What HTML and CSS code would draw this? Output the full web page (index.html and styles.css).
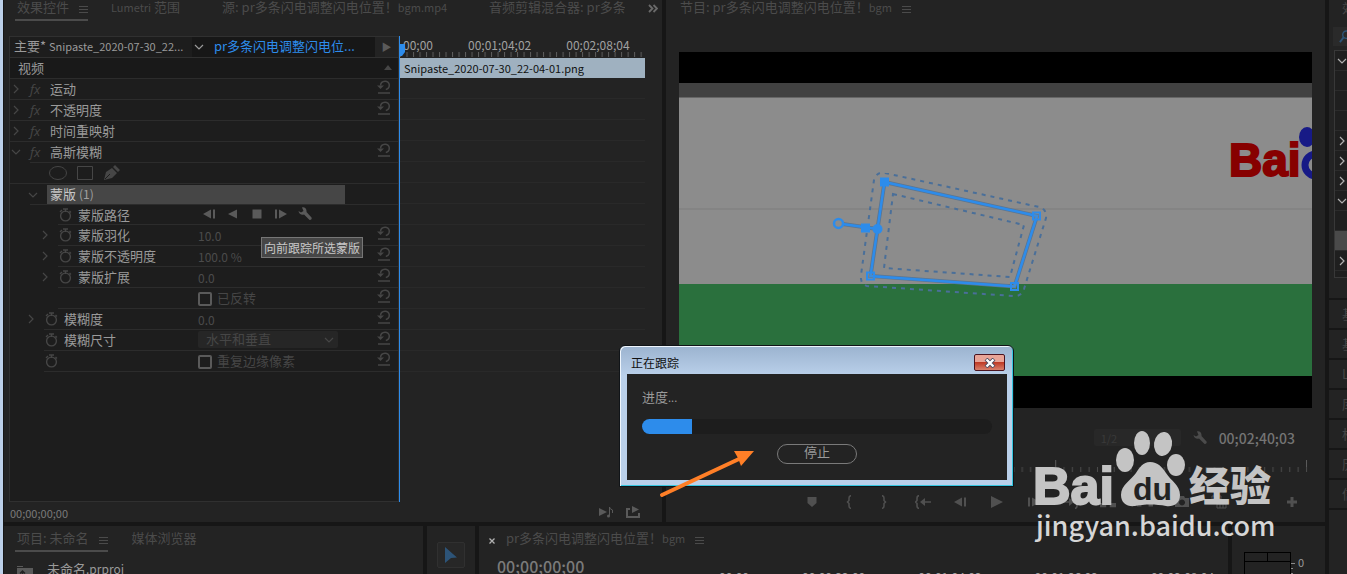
FILE: index.html
```html
<!DOCTYPE html>
<html lang="zh-CN">
<head>
  <meta charset="UTF-8">
  <meta name="viewport" content="width=device-width, initial-scale=1.0">
  <title>效果控件</title>
  <link rel="stylesheet" href="styles.css">
</head>
<body>
  <!-- Iconos compartidos -->
  <svg class="sprite" aria-hidden="true">
    <symbol id="menu" viewBox="0 0 9 9"><path d="M0 1.5h9M0 4.5h9M0 7.5h9" stroke="currentColor"/></symbol>
    <symbol id="right" viewBox="0 0 10 10"><path d="M3 1l4 4-4 4" fill="none" stroke="currentColor" stroke-width="1.2"/></symbol>
    <symbol id="down" viewBox="0 0 10 10"><path d="M1 3l4 4 4-4" fill="none" stroke="currentColor" stroke-width="1.2"/></symbol>
    <symbol id="reset" viewBox="0 0 14 14"><path d="M3.500 5.500C4 .3 12 -.2 12.300 5c0 2.500-1.300 4-3.500 4.500M1 13h12" fill="none" stroke="currentColor" stroke-width="1.500"/><path d="M0 5.500h7L3.500 9z" fill="currentColor"/></symbol>
    <symbol id="watch" viewBox="0 0 14 14"><circle cx="6.500" cy="8" r="4.900" fill="none" stroke="currentColor" stroke-width="1.400"/><path d="M4 1h5M6.500 1v3M1 4l2-2M10.500 3l1.500 1.500" stroke="currentColor" stroke-width="1.300"/></symbol>
    <symbol id="wrench" viewBox="0 0 14 14"><path d="M4 .5C6.500-.3 9 2 8.500 5l5 5.500c.8 1.300-.9 3-2.200 2.200L6 7.500C3.500 8.500.8 6.500.5 4L3 5.500 5.500 4z" fill="currentColor"/></symbol>
    <symbol id="play" viewBox="0 0 14 14"><path d="M1 1l12 6-12 6z" fill="currentColor"/></symbol>
    <symbol id="back" viewBox="0 0 14 14"><path d="M11 2.500v9L2 7z" fill="currentColor"/></symbol>
    <symbol id="step-back" viewBox="0 0 14 14"><path d="M9 2.500v9L1 7zM11 2.500h2v9h-2z" fill="currentColor"/></symbol>
    <symbol id="step" viewBox="0 0 14 14"><path d="M5 2.500v9L13 7zM1 2.500h2v9H1z" fill="currentColor"/></symbol>
    <symbol id="stop" viewBox="0 0 14 14"><path d="M2.500 2.500h9v9h-9z" fill="currentColor"/></symbol>
    <symbol id="marker" viewBox="0 0 14 14"><path d="M2.500 2h9v6L7 12 2.500 8z" fill="currentColor"/></symbol>
    <symbol id="brace-l" viewBox="0 0 14 14"><path d="M9 .7Q7 .7 7 3v2.500L5.500 7 7 8.500V11q0 2.300 2 2.300" fill="none" stroke="currentColor" stroke-width="1.500"/></symbol>
    <symbol id="brace-r" viewBox="0 0 14 14"><path d="M3 .7Q5 .7 5 3v2.500L6.500 7 5 8.500V11q0 2.300-2 2.300" fill="none" stroke="currentColor" stroke-width="1.500"/></symbol>
    <symbol id="goto-in" viewBox="0 0 16 14"><path d="M4 .7Q2 .7 2 3v2.500L.7 7 2 8.500V11q0 2.300 2 2.300M9 7h7" fill="none" stroke="currentColor" stroke-width="1.600"/><path d="M5 7l5-4v8z" fill="currentColor"/></symbol>
    <symbol id="goto-out" viewBox="0 0 16 14"><path d="M12 .7q2 0 2 2.300v2.500L15.300 7 14 8.500V11q0 2.300-2 2.300M0 7h7" fill="none" stroke="currentColor" stroke-width="1.600"/><path d="M11 7L6 3v8z" fill="currentColor"/></symbol>
    <symbol id="lift" viewBox="0 0 18 14"><path d="M0 8h7v5H0zM11 8h7v5h-7zM5 5l4-4 4 4h-3v3H8V5z" fill="currentColor"/></symbol>
    <symbol id="extract" viewBox="0 0 18 14"><path d="M0 2h5v10H0zM13 2h5v10h-5zM6 7l4-3v2h2v2h-2v2z" fill="currentColor"/></symbol>
    <symbol id="camera" viewBox="0 0 16 14"><path fill-rule="evenodd" d="M1 3h4l1-2h4l1 2h4v9H1zM8 4.500a3 3 0 1 0 .1 0z" fill="currentColor"/></symbol>
    <symbol id="compare" viewBox="0 0 16 14"><path d="M1 1h9v7H1zM6 6h9v7H6zM6 9h9M9 6v7M12 6v7M1 4h9" fill="none" stroke="currentColor"/></symbol>
    <symbol id="plus" viewBox="0 0 14 14"><path d="M7 2v10M2 7h10" stroke="currentColor" stroke-width="3"/></symbol>
  </svg>

  <div class="app">
    <main class="workspace">
      <div class="row-top">
        <!-- Panel de controles de efectos -->
        <section class="panel effects">
          <nav class="tabs">
            <button class="tab active">效果控件<svg class="menu"><use href="#menu"/></svg></button>
            <button class="tab"><span><span class="latin">Lumetri</span> 范围</span></button>
            <button class="tab"><span>源: pr多条闪电调整闪电位置！<span class="latin">bgm.mp4</span></span></button>
            <button class="tab clipped">音频剪辑混合器: pr多条闪电</button>
            <button class="more" aria-label="更多"><svg viewBox="0 0 10 9"><path d="M1 1l3.500 3.500L1 8M5.500 1L9 4.500 5.500 8" fill="none" stroke="currentColor" stroke-width="1.800"/></svg></button>
          </nav>
          <div class="effects-body">
            <div class="controls">
              <div class="clip-head">
                <span class="master">主要* <span class="latin">Snipaste_2020-07-30_22...</span></span>
                <button class="sequence"><svg class="ico10"><use href="#down"/></svg><span>pr多条闪电调整闪电位...</span></button>
                <button class="toggle" aria-label="时间轴">▶</button>
              </div>
              <div class="row video"><span>视频</span><i class="up"></i></div>
              <div class="row"><svg class="ico10"><use href="#right"/></svg><em>fx</em><span class="name">运动</span><svg class="reset"><use href="#reset"/></svg></div>
              <div class="row"><svg class="ico10"><use href="#right"/></svg><em>fx</em><span class="name">不透明度</span><svg class="reset"><use href="#reset"/></svg></div>
              <div class="row"><svg class="ico10"><use href="#right"/></svg><em>fx</em><span class="name">时间重映射</span></div>
              <div class="row line-20"><svg class="ico10"><use href="#down"/></svg><em>fx</em><span class="name">高斯模糊</span><svg class="reset"><use href="#reset"/></svg></div>
              <div class="row shapes">
                <button aria-label="椭圆"><svg viewBox="0 0 18 16"><ellipse cx="9" cy="8" rx="8.500" ry="6.500" fill="none" stroke="currentColor"/></svg></button>
                <button aria-label="矩形"><svg viewBox="0 0 18 16"><path d="M1.500 1.500h15v13h-15z" fill="none" stroke="currentColor"/></svg></button>
                <button aria-label="钢笔"><svg viewBox="0 0 18 16"><path d="M1 15L3 7l6-4 5 5-5 5zM10 2l2-2 5 5-2 2z" fill="currentColor"/><path d="M2 14l5-5" stroke="#1d1d1d"/></svg></button>
              </div>
              <div class="row mask line-20"><svg class="ico10"><use href="#down"/></svg><span class="mask-name">蒙版 <small>(1)</small></span></div>
              <div class="row sub path line-48">
                <i class="ico10"></i><svg class="watch"><use href="#watch"/></svg><span class="name">蒙版路径</span>
                <div class="track">
                  <button aria-label="向后跟踪一帧"><svg><use href="#step-back"/></svg></button>
                  <button aria-label="向后跟踪"><svg><use href="#back"/></svg></button>
                  <button aria-label="停止"><svg><use href="#stop"/></svg></button>
                  <button aria-label="向前跟踪一帧"><svg><use href="#step"/></svg></button>
                  <button aria-label="跟踪方法"><svg><use href="#wrench"/></svg></button>
                </div>
                <div class="tooltip">向前跟踪所选蒙版</div>
              </div>
              <div class="row sub line-48"><svg class="ico10"><use href="#right"/></svg><svg class="watch"><use href="#watch"/></svg><span class="name">蒙版羽化</span><span class="value">10.0</span><svg class="reset"><use href="#reset"/></svg></div>
              <div class="row sub line-48"><svg class="ico10"><use href="#right"/></svg><svg class="watch"><use href="#watch"/></svg><span class="name">蒙版不透明度</span><span class="value">100.0 %</span><svg class="reset"><use href="#reset"/></svg></div>
              <div class="row sub line-48"><svg class="ico10"><use href="#right"/></svg><svg class="watch"><use href="#watch"/></svg><span class="name">蒙版扩展</span><span class="value">0.0</span><svg class="reset"><use href="#reset"/></svg></div>
              <div class="row sub line-48"><span class="name"></span><label class="check"><input type="checkbox">已反转</label><svg class="reset"><use href="#reset"/></svg></div>
              <div class="row prop line-34"><svg class="ico10"><use href="#right"/></svg><svg class="watch"><use href="#watch"/></svg><span class="name">模糊度</span><span class="value">0.0</span><svg class="reset"><use href="#reset"/></svg></div>
              <div class="row prop line-34"><i class="ico10"></i><svg class="watch"><use href="#watch"/></svg><label class="name" for="dimension">模糊尺寸</label>
                <span class="select"><select id="dimension"><option>水平和垂直</option></select><svg class="ico10"><use href="#down"/></svg></span>
                <svg class="reset"><use href="#reset"/></svg></div>
              <div class="row prop line-34"><i class="ico10"></i><svg class="watch"><use href="#watch"/></svg><span class="name"></span><label class="check"><input type="checkbox">重复边缘像素</label><svg class="reset"><use href="#reset"/></svg></div>
            </div>
            <div class="keyframes">
              <div class="ruler">
                <div class="labels"><span>00;00</span><span>00;01;04;02</span><span>00;02;08;04</span></div>
                <svg class="ticks" viewBox="0 0 246 5" preserveAspectRatio="none">
                  <defs><pattern id="small-ticks" width="6.530" height="5" patternUnits="userSpaceOnUse"><path d="M.5 0v5" stroke="#5c5c5c"/></pattern></defs>
                  <rect width="244" height="5" fill="url(#small-ticks)"/>
                </svg>
              </div>
              <div class="clip">Snipaste_2020-07-30_22-04-01.png</div>
              <div class="lines"></div>
              <svg class="playhead" viewBox="0 0 6 12"><path d="M0 0h6v8l-3 4H0z" fill="#2d8ceb"/></svg>
            </div>
          </div>
          <footer class="effects-foot">
            <span>00;00;00;00</span>
            <button aria-label="播放音频"><svg viewBox="0 0 14 12"><path d="M0 2l8 4-8 4z" fill="currentColor"/><path d="M10.500 10V1q0 2 3 3v3" fill="none" stroke="currentColor"/><circle cx="9.500" cy="10" r="1.500" fill="currentColor"/></svg></button>
            <button aria-label="导出"><svg viewBox="0 0 14 12"><path d="M4 3H1v8h12V7" fill="none" stroke="currentColor" stroke-width="2"/><path d="M6 0l7 3.500L6 7z" fill="currentColor"/></svg></button>
          </footer>
        </section>

        <!-- Monitor de programa -->
        <section class="panel program">
          <nav class="tabs">
            <button class="tab"><span>节目: pr多条闪电调整闪电位置！<span class="latin">bgm</span></span><svg class="menu"><use href="#menu"/></svg></button>
          </nav>
          <svg class="video-frame" viewBox="0 0 633 356">
            <rect width="633" height="356"/>
            <path d="M0 31h633v15H0z" fill="#414141"/>
            <path d="M0 45h633v1H0z" fill="#666"/>
            <path d="M0 46h633v186H0z" fill="#8c8c8c"/>
            <path d="M0 156h633v2H0z" fill="#848484"/>
            <path d="M0 232h633v92H0z" fill="#2a703d"/>
            <text x="550" y="124" class="logo-red">Bai</text>
            <ellipse cx="628" cy="85" rx="8" ry="10" fill="#171a86"/>
            <circle cx="637" cy="113" r="11" fill="none" stroke="#171a86" stroke-width="7"/>
            <g fill="none" stroke="#4a6f99" stroke-width="2" stroke-dasharray="4 5">
              <path d="M206 121l154 34q8 2 7 11l-22 71q-3 8-11 7l-146-10q-7-2-6-11l13-95q3-9 11-7z"/>
              <path d="M214 142l131 31-14 52-126-9z"/>
            </g>
            <g fill="none" stroke="#5c7590" stroke-width="4">
              <path d="M205.500 130L358 164l-22.500 70.500-144-10.500zM160 171.500l38.500 5.500"/>
            </g>
            <g fill="none" stroke="#2d8ceb" stroke-width="2.500">
              <path d="M205.500 130L358 164l-22.500 70.500-144-10.500zM160 171.500l38.500 5.500"/>
              <circle cx="159.500" cy="171.500" r="4.500" fill="#8c8c8c"/>
            </g>
            <g fill="#2d8ceb"><path d="M201 125.500h9v9h-9zM182 171.500h9v9h-9z"/><circle cx="198.500" cy="177" r="5"/></g>
            <g fill="#8c8c8c" fill-opacity=".2" stroke="#2d8ceb" stroke-width="2"><path d="M354 160.500h7v7h-7zM332 231h7v7h-7zM188 220.500h7v7h-7z"/></g>
          </svg>
          <div class="monitor-info">
            <select aria-label="回放分辨率"><option>1/2</option></select>
            <svg class="ico14"><use href="#wrench"/></svg>
            <span class="timecode">00;02;40;03</span>
          </div>
          <svg class="scrub" viewBox="0 0 633 12">
            <defs><pattern id="scrub-ticks" width="125.400" height="12" patternUnits="userSpaceOnUse">
              <path d="M.5 0v12" stroke="#5a5a5a"/>
              <path d="M0 9.500h125.400" stroke="#4a4a4a" stroke-width="5" stroke-dasharray="1 7.360"/>
            </pattern></defs>
            <rect width="629" height="12" fill="url(#scrub-ticks)"/>
          </svg>
          <div class="transport">
            <button aria-label="添加标记"><svg><use href="#marker"/></svg></button>
            <button aria-label="标记入点"><svg><use href="#brace-l"/></svg></button>
            <button aria-label="标记出点"><svg><use href="#brace-r"/></svg></button>
            <button aria-label="转到入点"><svg><use href="#goto-in"/></svg></button>
            <button aria-label="后退一帧"><svg><use href="#step-back"/></svg></button>
            <button aria-label="播放"><svg><use href="#play"/></svg></button>
            <button aria-label="前进一帧"><svg><use href="#step"/></svg></button>
            <button aria-label="转到出点"><svg><use href="#goto-out"/></svg></button>
            <button aria-label="提升"><svg><use href="#lift"/></svg></button>
            <button aria-label="提取"><svg><use href="#extract"/></svg></button>
            <button aria-label="导出帧"><svg><use href="#camera"/></svg></button>
            <button aria-label="比较视图"><svg><use href="#compare"/></svg></button>
            <button class="add" aria-label="按钮编辑器"><svg><use href="#plus"/></svg></button>
          </div>
        </section>
      </div>

      <div class="row-bottom">
        <section class="panel project">
          <nav class="tabs">
            <button class="tab active">项目: 未命名<svg class="menu"><use href="#menu"/></svg></button>
            <button class="tab">媒体浏览器</button>
          </nav>
          <div class="project-file">
            <svg viewBox="0 0 16 14"><path d="M0 1h6v1H0zM0 3h16v11H0z" fill="#5a5a5a"/><path d="M5.500 13V6M3 8.500L5.500 6 8 8.500" stroke="#232323" fill="none" stroke-width="1.500"/></svg>
            <span>未命名<span class="file-ext">.prproj</span></span>
          </div>
        </section>
        <section class="panel tools">
          <button aria-label="选择工具"><svg viewBox="0 0 12 16"><path d="M0 0l12 10.500-6 .5-6 5z" fill="#2d5478"/></svg></button>
        </section>
        <section class="panel timeline">
          <nav class="tabs">
            <button class="close-tab" aria-label="关闭"><svg viewBox="0 0 6 6"><path d="M.5 .5l5 5M5.500 .5l-5 5" stroke="currentColor" stroke-width="1.300"/></svg></button>
            <button class="tab"><span>pr多条闪电调整闪电位置！<span class="latin">bgm</span></span><svg class="menu"><use href="#menu"/></svg></button>
          </nav>
          <div class="timeline-head">
            <span class="big-time">00;00;00;00</span>
            <div class="times"><span>00;00</span><span>00;00;32;00</span><span>00;01;04;02</span><span>00;01;36;02</span><span>00;02;08;04</span></div>
          </div>
        </section>
        <section class="panel meters">
          <div class="meter"><i></i><i></i></div>
          <svg class="scale" viewBox="0 0 4 12"><path d="M0 .5h4M0 5.500h2M0 10.500h2" stroke="#8a8a8a"/></svg>
          <span>0</span>
        </section>
      </div>
    </main>

    <!-- Paneles laterales -->
    <aside class="side">
      <section class="panel side-effects">
        <span class="side-title">效果</span>
        <div class="search"><svg viewBox="0 0 14 14"><circle cx="8" cy="5" r="4" fill="none" stroke="#2d5478" stroke-width="1.500"/><path d="M5 8l-4 5" stroke="#2d5478" stroke-width="2"/></svg></div>
        <ul class="tree">
          <li><svg><use href="#down"/></svg></li>
          <li></li><li></li><li></li>
          <li><svg><use href="#right"/></svg></li>
          <li><svg><use href="#right"/></svg></li>
          <li><svg><use href="#right"/></svg></li>
          <li><svg><use href="#down"/></svg></li>
          <li></li>
          <li class="selected"></li>
          <li><svg><use href="#right"/></svg></li>
        </ul>
      </section>
      <button class="panel side-tab">基本图形</button>
      <button class="panel side-tab">基本声音</button>
      <button class="panel side-tab">Lumetri 颜色</button>
      <button class="panel side-tab">库</button>
      <button class="panel side-tab">标记</button>
      <button class="panel side-tab">历史记录</button>
      <button class="panel side-tab">信息</button>
      <div class="panel side-rest"></div>
    </aside>
  </div>

  <!-- Ventana de progreso -->
  <div class="dialog" role="dialog" aria-labelledby="dialog-title">
    <div class="dialog-bar">
      <span id="dialog-title">正在跟踪</span>
      <button class="close" aria-label="关闭"><svg viewBox="0 0 12 10"><path d="M2 1l8 8M10 1L2 9" stroke="#4b4b60" stroke-width="4"/><path d="M2.500 1.500l7 7M9.500 1.500l-7 7" stroke="#fff" stroke-width="2.400"/></svg></button>
    </div>
    <div class="dialog-body">
      <p>进度<span class="latin">...</span></p>
      <div class="progress"><div class="progress-fill" style="width: 14.300%"></div></div>
      <button class="cancel">停止</button>
    </div>
  </div>

  <svg class="arrow" viewBox="0 0 96 54" aria-hidden="true"><path d="M3 48L80 12" stroke="#ff7f27" stroke-width="4" stroke-linecap="round"/><path d="M95 4L75 4 79 11 82 19z" fill="#ff7f27"/></svg>

  <svg class="watermark" viewBox="0 0 246 120">
    <g fill="#c4c4c4">
      <ellipse cx="93" cy="32" rx="9" ry="12"/>
      <ellipse cx="110" cy="15" rx="8" ry="12"/>
      <ellipse cx="131" cy="16" rx="9" ry="12" transform="rotate(8 131 16)"/>
      <ellipse cx="144" cy="37" rx="9" ry="11"/>
      <path d="M118 34c8 0 12 5 16 11 5 8 14 12 14 22 0 9-7 12-14 11-10-2-22-2-31 0-8 1-14-3-14-11 0-10 10-15 15-22 4-6 7-11 14-11z"/>
      <text x="1" y="76" class="mark-bai">Bai</text>
      <text x="157" y="73" class="mark-cn">经验</text>
    </g>
    <text x="101" y="72" class="mark-du">du</text>
    <text x="4" y="108" class="mark-url">jingyan.baidu.com</text>
  </svg>
</body>
</html>
```

FILE: styles.css
```css
/* Estilos generales */
* {
  box-sizing: border-box;
}

body {
  margin: 0;
  height: 100vh;
  overflow: hidden;
  background: #161616;
  color: #9a9a9a;
  font-family: "Noto Sans CJK SC", "Noto Sans", sans-serif;
  font-size: 13px;
  line-height: 16px;
  white-space: nowrap;
}

button, select, input {
  margin: 0;
  padding: 0;
  border: none;
  background: none;
  color: inherit;
  font: inherit;
}

svg {
  display: block;
  flex: none;
}

.sprite {
  position: absolute;
  width: 0;
  height: 0;
}

.app {
  display: flex;
  gap: 4px;
  height: 100vh;
  border-left: 3px solid #bcd0e9;
  padding-left: 1px;
}

.workspace {
  flex: 1;
  min-width: 0;
  display: flex;
  flex-direction: column;
  gap: 4px;
}

.row-top {
  display: grid;
  grid-template-columns: 658fr 659fr;
  gap: 4px;
}

.row-bottom {
  flex: 1;
  display: grid;
  grid-template-columns: 419fr 48px 749fr 93px;
  gap: 4px;
  min-height: 0;
}

.panel {
  background: #232323;
  min-width: 0;
  overflow: hidden;
}

.ico10 {
  width: 10px;
  height: 10px;
  flex: none;
}

.ico14 {
  width: 14px;
  height: 14px;
}

.latin {
  font-size: 11px;
}

/* Pestañas */
.tabs {
  display: flex;
  gap: 23px;
  padding-left: 11px;
  color: #4b4b4b;
}

.tab {
  display: flex;
  align-items: center;
  gap: 10px;
  height: 21px;
  padding: 0 19px 5px 0;
  border-bottom: 2px solid transparent;
}

.tab.active {
  padding: 0 0 5px 2px;
  border-color: #4b4b4b;
}

.tab.clipped {
  flex: 1;
  min-width: 0;
  padding-right: 0;
  overflow: hidden;
}

.menu {
  width: 9px;
  height: 9px;
  margin-top: 4px;
}

.more {
  margin-right: 4px;
  color: #6a6a6a;
}

.more svg {
  width: 10px;
  height: 9px;
  margin-bottom: 4px;
}

/* Controles de efectos */
.effects {
  display: flex;
  flex-direction: column;
}

.effects-body {
  flex: 1;
  display: grid;
  grid-template-columns: 390fr 246fr;
  margin: 15px 17px 0 5px;
}

.controls {
  border: 1px solid #303030;
  background: #1d1d1d;
  min-width: 0;
}

.clip-head {
  display: flex;
  height: 21px;
  border-bottom: 1px solid #303030;
  line-height: 18px;
}

.master {
  width: 182px;
  padding-left: 4px;
  overflow: hidden;
}

.sequence {
  flex: 1;
  display: flex;
  align-items: center;
  gap: 10px;
  padding-left: 2px;
  background: #171717;
  overflow: hidden;
}

.sequence span {
  padding-bottom: 2px;
  color: #2d8ceb;
}

.toggle {
  width: 23px;
  background: #232323;
  color: #5a5a5a;
  font-size: 10px;
}

.row {
  --indent: 0;
  position: relative;
  display: flex;
  align-items: center;
  height: 21px;
  padding: 0 7px 2px 1px;
  background: linear-gradient(#2c2c2c, #2c2c2c) no-repeat var(--indent) 100% / 100% 1px;
  color: #464646;
}

.line-20 { --indent: 20px; }
.line-34 { --indent: 34px; }
.line-48 { --indent: 48px; }

.video {
  justify-content: space-between;
  padding-left: 8px;
  background-color: #191919;
  color: #9a9a9a;
}

.up {
  border: 4px solid transparent;
  border-top: none;
  border-bottom: 5px solid #464646;
  margin-right: -1px;
}

.row em {
  width: 29px;
  padding-left: 9px;
  font-family: "Open Sans", sans-serif;
  font-size: 13px;
}

.name {
  width: 120px;
  color: #9a9a9a;
}

.reset {
  width: 14px;
  height: 14px;
  margin: 0 0 3px auto;
}

.shapes {
  gap: 9px;
  padding-left: 39px;
}

.shapes svg {
  width: 18px;
  height: 16px;
}

.row.mask {
  gap: 9px;
  padding: 0 0 0 18px;
}

.mask-name {
  width: 298px;
  height: 19px;
  padding-left: 3px;
  background: #464646;
  color: #c8c8c8;
  line-height: 18px;
}

.mask-name small {
  font-size: 12px;
  color: #a0a0a0;
}

.sub {
  padding-left: 30px;
}

.row.path {
  height: 20px;
  padding-bottom: 0;
}

.prop {
  padding-left: 16px;
}

.watch {
  width: 14px;
  height: 14px;
  margin: 0 5px 0 9px;
}

.sub .name:first-child {
  width: 158px;
}

.prop .name {
  width: 134px;
}

.value {
  padding-top: 3px;
  font-size: 12px;
  color: #4b4b4b;
}

.track {
  display: flex;
  gap: 10px;
  padding: 0 0 3px 4px;
}

.track svg {
  width: 14px;
  height: 14px;
  color: #5a5a5a;
}

.tooltip {
  position: absolute;
  top: 32px;
  left: 251px;
  z-index: 1;
  height: 21px;
  padding: 0 2px;
  border: 1px solid #767676;
  background: #464646;
  color: #c8c8c8;
  font-size: 12px;
  line-height: 19px;
}

.check {
  display: flex;
  align-items: center;
  gap: 5px;
}

.check input {
  appearance: none;
  width: 14px;
  height: 14px;
  margin-top: 3px;
  border: 2px solid #5a5a5a;
  border-radius: 2px;
}

.select {
  display: flex;
  align-items: center;
  width: 140px;
  height: 17px;
  padding-right: 4px;
  border-radius: 2px;
  background: #262626;
}

.select select {
  flex: 1;
  appearance: none;
  padding: 0 0 2px 8px;
  height: 17px;
}

.keyframes {
  position: relative;
  border-left: 1px solid #2d8ceb;
  min-width: 0;
}

.ruler {
  height: 22px;
}

.labels {
  display: flex;
  gap: 35px;
  height: 16px;
  padding: 1px 0 0 3px;
  color: #a0a0a0;
  font-size: 12px;
}

.ticks {
  width: 100%;
  height: 5px;
}

.clip {
  height: 20px;
  padding-left: 4px;
  background: #9fb1c0;
  color: #111;
  font-size: 11px;
  line-height: 20px;
}

.lines {
  height: 294px;
  background: repeating-linear-gradient(transparent 0 20px, #292929 20px 21px);
}

.playhead {
  position: absolute;
  top: 8px;
  left: -1px;
  width: 6px;
  height: 12px;
}

.effects-foot {
  display: flex;
  align-items: center;
  gap: 13px;
  height: 20px;
  padding: 0 22px 0 6px;
  color: #7a7a7a;
}

.effects-foot span {
  margin-right: auto;
  padding-top: 2px;
  font-size: 11px;
}

.effects-foot svg {
  width: 14px;
  height: 12px;
  color: #5a5a5a;
}

/* Monitor de programa */
.program {
  padding: 0 13px;
}

.program .tabs {
  padding-left: 1px;
  height: 52px;
}

.video-frame {
  width: 100%;
  height: auto;
}

.logo-red {
  fill: #870000;
  stroke: #870000;
  stroke-width: 2px;
  font: bold 46px "Liberation Sans", sans-serif;
}

.monitor-info {
  display: flex;
  align-items: center;
  justify-content: flex-end;
  height: 52px;
  padding: 7px 17px 0 0;
  color: #4b4b4b;
}

.monitor-info select {
  appearance: none;
  width: 87px;
  height: 17px;
  margin-right: 12px;
  padding-left: 7px;
  border-radius: 2px;
  background: #282828;
  color: #3a3a3a;
  font-size: 11px;
}

.timecode {
  margin-left: 12px;
  color: #747474;
  font-size: 14px;
  font-weight: 500;
}

.scrub {
  width: 100%;
  height: auto;
}

.transport {
  display: flex;
  height: 50px;
  padding: 10px 12px 0 114px;
  color: #505050;
}

.transport button {
  width: 37px;
  height: 40px;
}

.transport svg {
  width: 16px;
  height: 14px;
  margin: 0 auto;
}

.transport .add {
  width: 16px;
  margin-left: auto;
}

/* Fila inferior */
.row-bottom .tabs {
  padding-top: 5px;
}

.project .tab.active + .tab {
  padding-left: 1px;
}

.project-file {
  display: flex;
  align-items: center;
  gap: 14px;
  padding: 7px 13px;
}

.project-file svg {
  width: 16px;
  height: 14px;
  margin-top: 6px;
}

.file-ext {
  font-size: 12px;
}

.tools {
  padding: 16px 10px;
}

.tools button {
  width: 28px;
  height: 26px;
  border: 1px solid #303030;
  border-radius: 2px;
  background: #272727;
}

.tools svg {
  width: 12px;
  height: 16px;
  margin: 0 auto;
}

.timeline .tabs {
  gap: 11px;
  padding-left: 10px;
}

.close-tab {
  height: 18px;
  color: #b0b0b0;
}

.close-tab svg {
  width: 6px;
  height: 6px;
  margin-top: 2px;
}

.timeline-head {
  display: flex;
  padding: 6px 0 0 18px;
}

.big-time {
  width: 222px;
  color: #7a7a7a;
  font-size: 16px;
  font-weight: 500;
}

.times {
  display: flex;
  gap: 53px;
  padding-top: 11px;
  color: #a0a0a0;
  font-size: 12px;
}

.meters {
  display: flex;
  padding: 26px 0 0 12px;
  font-size: 11px;
}

.meters span {
  padding: 2px 0 0 3px;
}

.meter {
  display: flex;
  width: 47px;
  height: 200px;
  border: 1px solid #000;
}

.meter i {
  flex: 1;
  height: 9px;
  border-bottom: 1px solid #000;
}

.meter i + i {
  border-left: 1px solid #000;
}

.scale {
  width: 4px;
  height: 12px;
  margin-top: 11px;
}

/* Barra lateral */
.side {
  width: 18px;
  flex: none;
  display: flex;
  flex-direction: column;
  gap: 2px;
  overflow: hidden;
}

.side-effects {
  height: 298px;
  padding-left: 4px;
  color: #464646;
}

.side-title {
  display: block;
  height: 27px;
  padding-left: 9px;
}

.search {
  height: 19px;
  padding: 3px 0 0 6px;
  background: #2a2a2a;
}

.search svg {
  width: 13px;
  height: 13px;
}

.tree {
  height: 228px;
  margin: 4px 0 0 1px;
  padding: 0 0 6px;
  border: 1px solid #383838;
  border-right: none;
  background: #1f1f1f;
  list-style: none;
}

.tree li {
  display: flex;
  align-items: center;
  height: 20px;
  padding: 1px 0 0 2px;
  border-bottom: 1px solid #2b2b2b;
  color: #b0b0b0;
}

.tree svg {
  width: 10px;
  height: 10px;
}

.tree .selected {
  background: #4a4a4a;
}

.side-tab {
  flex: none;
  height: 28px;
  padding-left: 13px;
  color: #464646;
  text-align: left;
}

.side-rest {
  flex: 1;
}

/* Ventana de progreso */
.dialog {
  position: absolute;
  top: 345px;
  left: 619px;
  width: 395px;
  padding: 0 6px 6px 7px;
  border: 1px solid #101418;
  border-radius: 6px 6px 0 0;
  background: linear-gradient(#9bb3cf, #bad0ea 30px);
  box-shadow: inset 1px 1px #eef5fc, inset -1px -1px #35c6e0;
}

.dialog-bar {
  display: flex;
  align-items: center;
  justify-content: space-between;
  height: 28px;
  padding: 5px 2px 0 4px;
  color: #111;
  font-size: 12px;
}

.close {
  width: 31px;
  height: 17px;
  border: 1px solid #4b1420;
  border-radius: 2px;
  background: linear-gradient(#e8a497 0 45%, #bf3b26 50%, #d8806c);
}

.close svg {
  width: 12px;
  height: 10px;
  margin: 0 auto;
}

.dialog-body {
  padding: 15px 15px 16px;
  background: #232323;
}

.dialog-body p {
  margin: 0 0 14px;
}

.progress {
  height: 15px;
  border-radius: 8px;
  background: #1d1d1d;
  overflow: hidden;
}

.progress-fill {
  height: 15px;
  background: #2d8ceb;
}

.cancel {
  display: block;
  width: 80px;
  height: 20px;
  margin: 10px auto 0;
  padding-bottom: 4px;
  border: 1px solid #7a7a7a;
  border-radius: 10px;
  line-height: 14px;
}

.arrow {
  position: absolute;
  top: 447px;
  left: 659px;
  width: 96px;
  height: 54px;
}

/* Marca de agua */
.watermark {
  position: absolute;
  top: 428px;
  right: 69px;
  width: 246px;
  height: 120px;
}

.mark-bai {
  stroke: #c4c4c4;
  stroke-width: 2px;
  font: bold 52px "Liberation Sans", sans-serif;
}

.mark-cn {
  font: 900 41px "Noto Sans CJK SC", sans-serif;
}

.mark-du {
  fill: #232323;
  font: bold 32px "Liberation Sans", sans-serif;
}

.mark-url {
  fill: #d6d6d6;
  font: 500 27px "Noto Sans CJK SC", sans-serif;
}
```
